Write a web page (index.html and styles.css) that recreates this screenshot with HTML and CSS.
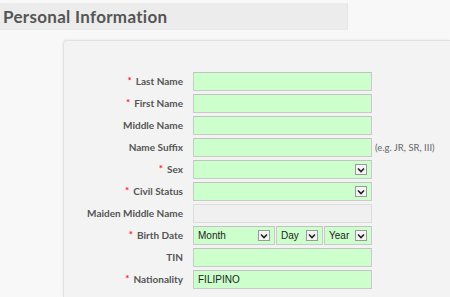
FILE: index.html
```html
<!DOCTYPE html>
<html>
<head>
<meta charset="utf-8">
<link rel="stylesheet" href="styles.css">
</head>
<body>
<div class="section-title">Personal Information</div>
<div class="panel">
  <div class="form">
    <label class="lbl"><span class="req">*</span>Last Name</label>
    <div class="field"><div class="input"></div></div>

    <label class="lbl"><span class="req">*</span>First Name</label>
    <div class="field"><div class="input"></div></div>

    <label class="lbl">Middle Name</label>
    <div class="field"><div class="input"></div></div>

    <label class="lbl">Name Suffix</label>
    <div class="field"><div class="input"></div><span class="hint">(e.g. JR, SR, III)</span></div>

    <label class="lbl"><span class="req">*</span>Sex</label>
    <div class="field"><div class="input select"><span class="val"></span><span class="arrow"><svg width="8" height="6" viewBox="0 0 8 6"><path d="M1 1.5 L4 4.5 L7 1.5" fill="none" stroke="#222" stroke-width="1.6"/></svg></span></div></div>

    <label class="lbl"><span class="req">*</span>Civil Status</label>
    <div class="field"><div class="input select"><span class="val"></span><span class="arrow"><svg width="8" height="6" viewBox="0 0 8 6"><path d="M1 1.5 L4 4.5 L7 1.5" fill="none" stroke="#222" stroke-width="1.6"/></svg></span></div></div>

    <label class="lbl">Maiden Middle Name</label>
    <div class="field"><div class="input disabled"></div></div>

    <label class="lbl"><span class="req">*</span>Birth Date</label>
    <div class="field">
      <div class="date">
        <div class="input select month"><span class="val">Month</span><span class="arrow"><svg width="8" height="6" viewBox="0 0 8 6"><path d="M1 1.5 L4 4.5 L7 1.5" fill="none" stroke="#222" stroke-width="1.6"/></svg></span></div>
        <div class="input select day"><span class="val">Day</span><span class="arrow"><svg width="8" height="6" viewBox="0 0 8 6"><path d="M1 1.5 L4 4.5 L7 1.5" fill="none" stroke="#222" stroke-width="1.6"/></svg></span></div>
        <div class="input select year"><span class="val">Year</span><span class="arrow"><svg width="8" height="6" viewBox="0 0 8 6"><path d="M1 1.5 L4 4.5 L7 1.5" fill="none" stroke="#222" stroke-width="1.6"/></svg></span></div>
      </div>
    </div>

    <label class="lbl">TIN</label>
    <div class="field"><div class="input"></div></div>

    <label class="lbl"><span class="req">*</span>Nationality</label>
    <div class="field"><div class="input"><span class="val">FILIPINO</span></div></div>
  </div>
</div>
</body>
</html>
```
FILE: styles.css
```css
html, body {
  margin: 0;
  padding: 0;
}
body {
  background: #f8f8f8;
  width: 450px;
  height: 297px;
  overflow: hidden;
  font-family: "Lato", "DejaVu Sans", sans-serif;
}
.section-title {
  margin-top: 3px;
  width: 348px;
  height: 27px;
  padding-left: 3px;
  background: #ececec;
  border-right: 1px solid #e6e6e6;
  border-bottom: 1px solid #e8e8e8;
  box-sizing: border-box;
  color: #555;
  font-weight: bold;
  font-size: 17px;
  letter-spacing: 0.3px;
  line-height: 28px;
}
.panel {
  box-sizing: border-box;
  margin-top: 10px;
  margin-left: 63px;
  height: 257px;
  background: #f3f3f3;
  border-top: 1px solid #e2e2e2;
  border-left: 1px solid #e2e2e2;
  border-top-left-radius: 4px;
  box-shadow: -1px -1px 2px rgba(0,0,0,0.04);
  padding-top: 31px;
}
.form {
  display: grid;
  grid-template-columns: 119px auto;
  column-gap: 10px;
  row-gap: 3px;
}
.lbl {
  text-align: right;
  color: #555;
  font-size: 10px;
  font-weight: bold;
  line-height: 19px;
  white-space: nowrap;
}
.req {
  color: #f22;
  margin-right: 4px;
  font-size: 10px;
  position: relative;
  top: -1px;
}
.field {
  display: flex;
  align-items: center;
}
.input {
  width: 179px;
  height: 19px;
  box-sizing: border-box;
  background: #ccffcc;
  border: 1px solid #c9c9c9;
  border-top-color: #c2c2c2;
  display: flex;
  align-items: center;
  justify-content: space-between;
  padding: 0 4px 0 4px;
  font-family: "Liberation Sans", Arial, sans-serif;
  font-size: 10px;
  color: #222;
}
.input.disabled {
  background: #f0f0f0;
  border-color: #dcdcdc;
}
.hint {
  margin-left: 3px;
  font-size: 9.5px;
  color: #666;
  font-family: "Lato", "DejaVu Sans", sans-serif;
}
.arrow {
  width: 12px;
  height: 11px;
  box-sizing: border-box;
  background: #f4f4f4;
  border: 1px solid #9a9a9a;
  display: flex;
  align-items: center;
  justify-content: center;
}
.date {
  display: flex;
  gap: 1px;
  width: 179px;
}
.date .month { width: 82px; }
.date .day { width: 47px; }
.date .year { width: 48px; }
```
